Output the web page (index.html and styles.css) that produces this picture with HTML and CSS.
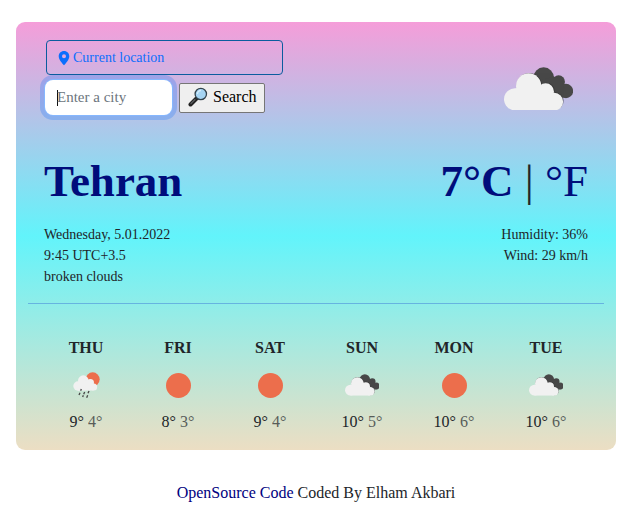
FILE: index.html
```html
<!DOCTYPE html>
<html lang="en">
<head>
<meta charset="utf-8">
<title>Weather</title>
<link rel="stylesheet" href="styles.css">
</head>
<body>
<svg class="defs" aria-hidden="true">
  <symbol id="clouds" viewBox="42 50 208 131">
    <g fill="#484848"><circle cx="161" cy="82" r="31"/><circle cx="206" cy="94" r="19"/><circle cx="228" cy="122" r="21.500"/><path d="M140 95L190 78L215 90L232 142L190 140Z"/></g>
    <g fill="#333" opacity=".7"><circle cx="118" cy="106" r="38"/><circle cx="169" cy="122" r="25"/><circle cx="195" cy="152" r="26"/></g>
    <g fill="#f1f1f1"><circle cx="75" cy="147" r="33"/><circle cx="116" cy="107" r="38"/><circle cx="167" cy="124" r="25"/><circle cx="193" cy="154" r="26.500"/><path d="M75 180V115L150 100L185 130L193 180.500H75Z"/></g>
  </symbol>
  <symbol id="rain" viewBox="38 29 81 81">
    <circle cx="97" cy="51" r="21" fill="#ec6e4c"/>
    <g fill="#f1f1f1"><circle cx="53" cy="71" r="14"/><circle cx="69" cy="55" r="16"/><circle cx="90" cy="61" r="11"/><circle cx="100" cy="74" r="10.500"/><path d="M53 85V60L90 52L100 84.500Z"/></g>
    <g stroke="#484848" stroke-width="4"><path d="M63 80L61 85M59 91L56 98M73 89L70 96M86 86L83 93M69 99L67 104M82 99L79 106"/></g>
  </symbol>
  <symbol id="sun" viewBox="0 0 25 25"><circle cx="12.500" cy="12.500" r="12.500" fill="#ec6e4c"/></symbol>
</svg>
<main class="card">
  <header class="top">
    <div class="controls">
      <button class="location" type="button">
        <svg class="pin" viewBox="0 0 12 16"><path fill="#0d6efd" fill-rule="evenodd" d="M6 1C2.900 1 .7 3.300.7 6.200.7 9.200 4 13.200 6 15.200 8 13.200 11.300 9.200 11.300 6.200 11.300 3.300 9.100 1 6 1ZM6 4.300A2 2 0 1 1 6 8.300 2 2 0 0 1 6 4.300Z"/></svg>
        Current location
      </button>
      <form class="search">
        <div class="field"><span class="caret"></span><span>Enter a city</span></div>
        <button class="submit" type="button">
          <svg class="glass" viewBox="0 0 20 20"><path d="M2.500 17.500L8.500 11.500" stroke="#222" stroke-width="4" stroke-linecap="round"/><path d="M3 16.500L7 12.500" stroke="#5b5e61" stroke-width="1.200" stroke-linecap="round"/><circle cx="12.800" cy="7" r="5.700" fill="#a5d4f3" stroke="#34434d" stroke-width="1.300"/><path d="M9.500 7A3.500 3.500 0 0 1 13 3.500" fill="none" stroke="#d3edfc" stroke-width="1.300"/></svg>
          Search
        </button>
      </form>
    </div>
    <svg class="current-icon"><use href="#clouds"/></svg>
  </header>
  <section class="headline">
    <h1>Tehran</h1>
    <div class="temperature"><b>7°C</b> <i>|</i> °F</div>
  </section>
  <section class="details">
    <div>Wednesday, 5.01.2022<br>9:45 UTC+3.5<br>broken clouds</div>
    <div class="right">Humidity: 36%<br>Wind: 29 km/h</div>
  </section>
  <section class="forecast">
    <div class="day"><b>THU</b><div class="icon"><svg class="rain"><use href="#rain"/></svg></div><p>9° <span>4°</span></p></div>
    <div class="day"><b>FRI</b><div class="icon"><svg class="sun"><use href="#sun"/></svg></div><p>8° <span>3°</span></p></div>
    <div class="day"><b>SAT</b><div class="icon"><svg class="sun"><use href="#sun"/></svg></div><p>9° <span>4°</span></p></div>
    <div class="day"><b>SUN</b><div class="icon"><svg class="cloud"><use href="#clouds"/></svg></div><p>10° <span>5°</span></p></div>
    <div class="day"><b>MON</b><div class="icon"><svg class="sun"><use href="#sun"/></svg></div><p>10° <span>6°</span></p></div>
    <div class="day"><b>TUE</b><div class="icon"><svg class="cloud"><use href="#clouds"/></svg></div><p>10° <span>6°</span></p></div>
  </section>
</main>
<footer><a>OpenSource Code</a> Coded By Elham Akbari</footer>
</body>
</html>
```
FILE: styles.css
```css
* { box-sizing: border-box; }
body {
  margin: 0;
  padding: 22px 21px 0 16px;
  background: #fff;
  color: #212529;
  font: 16px/24px "Liberation Serif", "Times New Roman", serif;
  overflow: hidden;
}
button { font-family: inherit; }
.defs { display: none; }
.card {
  width: 600px;
  height: 428px;
  padding: 18px 12px 0;
  border-radius: 9px;
  background: linear-gradient(#f59dd9, #62f4fb 50%, #ecdec3);
}
.top {
  display: flex;
  justify-content: space-between;
  height: 110px;
  padding: 0 31px 0 17px;
}
.location {
  display: flex;
  align-items: center;
  width: 237px;
  height: 35px;
  margin-left: 1px;
  padding: 0 12px 0 11px;
  gap: 3px;
  border: 1px solid #0b5c9e;
  border-radius: 4px;
  background: none;
  color: #0d6efd;
  font-size: 14px;
}
.pin { width: 12px; height: 16px; }
.search { display: flex; align-items: center; gap: 7px; margin-top: 5px; }
.field {
  display: flex;
  align-items: center;
  width: 127px;
  height: 35px;
  padding-left: 12px;
  border-radius: 8px;
  background: #fff;
  box-shadow: 0 0 0 1px #86b7fe, 0 0 0 5px rgba(13, 110, 253, .25);
  color: #6c757d;
  font-size: 15px;
  line-height: 20px;
}
.field span:last-child { margin-top: -1px; }
.caret { width: 1px; height: 16px; margin-right: -1px; background: #111; }
.submit {
  display: flex;
  align-items: center;
  gap: 5px;
  width: 86px;
  height: 30px;
  padding: 0 0 2px 8px;
  border: 1px solid #767676;
  border-radius: 2px;
  background: #efefef;
  color: #000;
  font-size: 16px;
}
.glass { width: 20px; height: 20px; }
.current-icon { width: 69.300px; height: 43.700px; margin-top: 26.700px; }
.headline {
  display: flex;
  justify-content: space-between;
  height: 58px;
  padding: 2px 16px 0;
  color: #000d7b;
  font-size: 45px;
  line-height: 58px;
}
h1 { margin: 0; font: inherit; font-weight: bold; }
.temperature i { color: #212529; font-style: normal; }
.details {
  display: flex;
  justify-content: space-between;
  height: 96px;
  padding: 16px 16px 0;
  border-bottom: 1px solid #66b4e0;
  font-size: 14px;
  line-height: 21px;
}
.right { text-align: right; }
.forecast {
  display: grid;
  grid-template-columns: repeat(6, 92px);
  margin: 32px -12px 0;
  padding-left: 24px;
  text-align: center;
}
.icon { display: flex; justify-content: center; align-items: center; height: 50px; }
.sun { width: 25px; height: 25px; }
.rain { width: 27px; height: 27px; }
.cloud { width: 34.700px; height: 21.800px; }
p { margin: 0; }
p span { opacity: .7; }
footer { margin-top: 31px; text-align: center; }
footer a { color: #000080; }
```
